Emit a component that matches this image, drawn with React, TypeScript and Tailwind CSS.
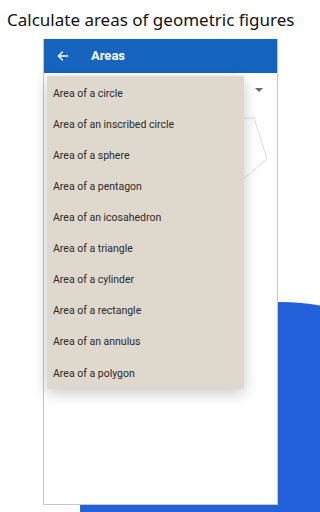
const shapes = [
  'Area of a circle',
  'Area of an inscribed circle',
  'Area of a sphere',
  'Area of a pentagon',
  'Area of an icosahedron',
  'Area of a triangle',
  'Area of a cylinder',
  'Area of a rectangle',
  'Area of an annulus',
  'Area of a polygon',
];

export default function App() {
  return (
    <div className="relative w-[320px] h-[512px] overflow-hidden bg-white">
      {/* Background blob */}
      <div className="absolute left-[80px] top-[302px] w-[404px] h-[404px] rounded-full bg-[#2361db]" />

      {/* Caption */}
      <div className="relative h-[39px] pl-[7px] pt-[8px] text-[17px] leading-[24px] text-[#111] font-['Noto_Sans',sans-serif]">
        Calculate areas of geometric figures
      </div>

      {/* Phone screen */}
      <div className="relative ml-[43px] w-[235px] h-[466px] bg-white border-x border-b border-[#c6c6c6] font-['Roboto',sans-serif]">
        <div className="flex items-center h-[34px] bg-[#1565c0] text-white">
          <svg className="ml-[12px]" width="14" height="14" viewBox="0 0 24 24" fill="none" stroke="white" strokeWidth="2.4" strokeLinecap="round" strokeLinejoin="round">
            <path d="M20 12H4M11 5l-7 7 7 7" />
          </svg>
          <span className="ml-[21px] text-[13px] font-bold">Areas</span>
        </div>

        {/* Spinner row */}
        <div className="flex justify-end h-[36px] pr-[14px] pt-[15px]">
          <div className="w-0 h-0 border-l-[4px] border-r-[4px] border-t-[4px] border-l-transparent border-r-transparent border-t-[#6b6b6b]" />
        </div>

        {/* Figure preview */}
        <svg className="absolute left-[180px] top-[70px]" width="50" height="80" viewBox="0 0 50 80">
          <path d="M2 9H30L43 50L10 78" fill="none" stroke="#d9d9f0" strokeWidth="1" />
        </svg>

        {/* Open dropdown menu */}
        <div className="absolute left-[3px] top-[37px] w-[197px] pt-[2px] pb-0 bg-[#dfd8cc] shadow-[0_4px_14px_rgba(0,0,0,0.22)]">
          {shapes.map((s) => (
            <div key={s} className="flex items-center h-[31.1px] pl-[6px] text-[10.5px] text-[#2b2b2b]">
              {s}
            </div>
          ))}
        </div>
      </div>
    </div>
  );
}
